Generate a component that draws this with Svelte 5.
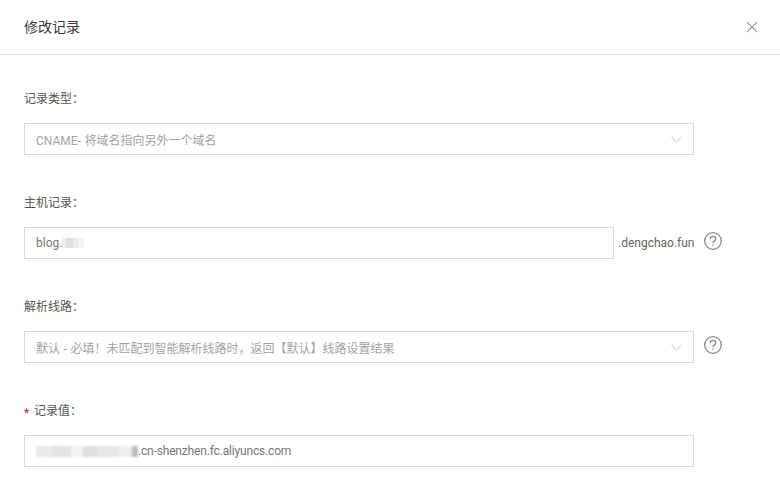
<script>
  const chevron = 'M0.5 0.5 L5.5 6.5 L10.5 0.5';
</script>

<div class="dialog">
  <header class="head">
    <h2>修改记录</h2>
    <svg class="close" width="12" height="12" viewBox="0 0 12 12" aria-label="关闭"><path d="M1 1 L11 11 M11 1 L1 11" /></svg>
  </header>
  <form class="body">
    <div class="item">
      <div class="label">记录类型：</div>
      <div class="row">
        <div class="field select muted">
          <span class="spaced">CNAME- 将域名指向另外一个域名</span>
          <svg class="chev" width="11" height="7" viewBox="0 0 11 7"><path d={chevron} /></svg>
        </div>
      </div>
    </div>
    <div class="item">
      <div class="label">主机记录：</div>
      <div class="row">
        <div class="field host"><span>blog.</span><i class="mask short"></i></div>
        <span class="suffix">.dengchao.fun</span>
        <svg class="help" width="18" height="18" viewBox="0 0 18 18"><circle cx="9" cy="9" r="8.3" /><path d="M6.2 7 C6.2 5.4 7.5 4.4 9 4.4 C10.6 4.4 11.8 5.4 11.8 6.9 C11.8 8.8 9 8.9 9 11.2 M9 12.4 L9 13.8" /></svg>
      </div>
    </div>
    <div class="item">
      <div class="label">解析线路：</div>
      <div class="row">
        <div class="field select muted">
          <span class="spaced">默认 - 必填！未匹配到智能解析线路时，返回【默认】线路设置结果</span>
          <svg class="chev" width="11" height="7" viewBox="0 0 11 7"><path d={chevron} /></svg>
        </div>
        <svg class="help" width="18" height="18" viewBox="0 0 18 18"><circle cx="9" cy="9" r="8.3" /><path d="M6.2 7 C6.2 5.4 7.5 4.4 9 4.4 C10.6 4.4 11.8 5.4 11.8 6.9 C11.8 8.8 9 8.9 9 11.2 M9 12.4 L9 13.8" /></svg>
      </div>
    </div>
    <div class="item">
      <div class="label"><b>*</b>记录值：</div>
      <div class="row">
        <div class="field"><i class="mask long"></i><span class="tail">.cn-shenzhen.fc.aliyuncs.com</span></div>
      </div>
    </div>
  </form>
</div>

<style>
  :global(body) { margin: 0; background: #fff; }
  .dialog {
    width: 780px;
    height: 496px;
    overflow: hidden;
    background: #fff;
    font-family: Roboto, "Noto Sans CJK SC", sans-serif;
    font-size: 12px;
    color: #333;
  }
  .head {
    height: 54px;
    border-bottom: 1px solid #e6ebee;
    display: flex;
    align-items: center;
    justify-content: space-between;
    padding: 0 22px 0 24px;
  }
  h2 { margin: 0 0 2px; font-size: 14px; font-weight: 400; color: #3a3a3a; }
  .close path { stroke: #999; stroke-width: 1.1; fill: none; }
  .body { padding: 34px 0 0 24px; }
  .item { height: 104px; }
  .label { height: 20px; line-height: 20px; margin-bottom: 14px; color: #555; }
  .label b { display: inline-block; width: 10px; color: #e02020; font-weight: 400; line-height: 1; transform: translateY(2px); }
  .row { display: flex; align-items: center; }
  .field {
    box-sizing: border-box;
    width: 670px;
    height: 32px;
    border: 1px solid #d9d9d9;
    padding: 0 11px;
    display: flex;
    align-items: center;
    color: #777;
  }
  .muted { color: #a3a3a3; }
  .spaced { word-spacing: 0.6px; }
  .select { justify-content: space-between; padding-right: 11px; }
  .host { width: 590px; }
  .suffix { margin-left: 4px; width: 76px; white-space: nowrap; color: #666; }
  .tail { letter-spacing: -0.17px; }
  .chev path { stroke: #ccc; stroke-width: 1; fill: none; }
  .help { margin-left: 10px; margin-top: -4px; }
  .help circle, .help path { stroke: #8a8a8a; stroke-width: 1.3; fill: none; }
  .mask { display: block; height: 10px; }
  .mask.short {
    width: 22px;
    background: linear-gradient(90deg, #eee 0 20%, #e0e0e0 20% 50%, #ececec 50% 75%, #f4f4f4 75% 100%);
    filter: blur(0.7px);
  }
  .mask.long {
    width: 102px;
    height: 11px;
    background: linear-gradient(90deg, #eaeaea 0 16%, #e2e2e2 16% 34%, #f2f2f2 34% 46%, #dedede 46% 60%, #e6e6e6 60% 80%, #eeeeee 80% 94%, #bdbdbd 94% 100%);
    filter: blur(1px);
  }
</style>
